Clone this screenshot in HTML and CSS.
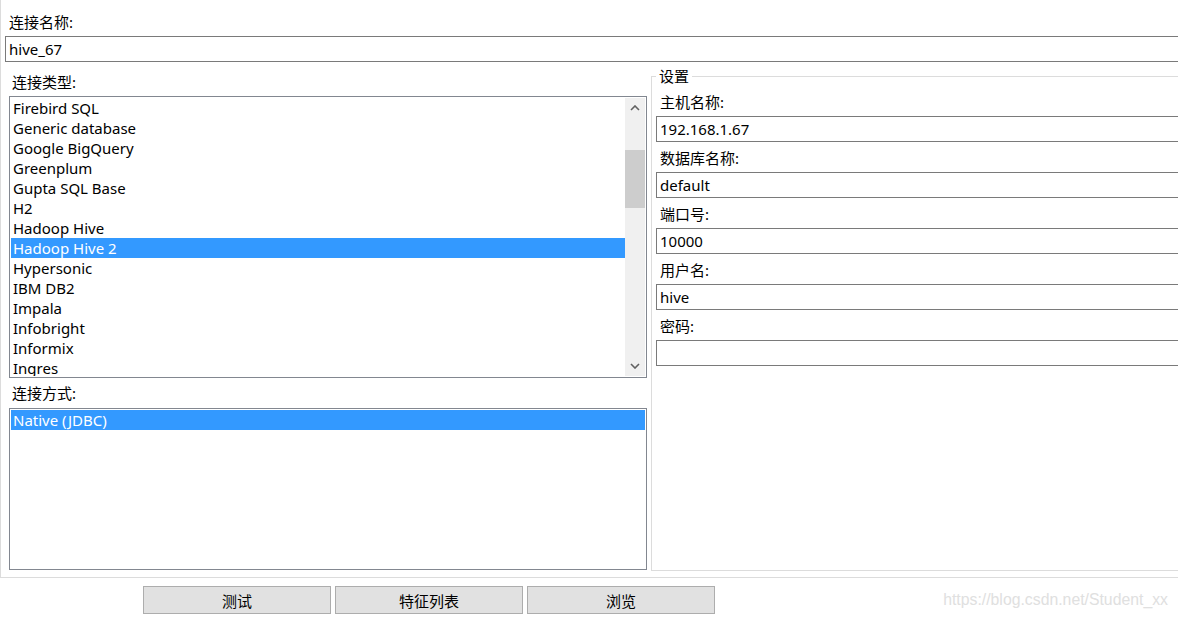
FILE: index.html
```html
<!DOCTYPE html>
<html lang="zh">
<head>
<meta charset="utf-8">
<title>连接</title>
<link rel="stylesheet" href="styles.css">
</head>
<body>
<div class="panel">
  <div class="label top-label">连接名称:</div>
  <div class="input top-input">hive_67</div>
  <div class="row">
    <div class="left-col">
      <div class="label sub-label">连接类型:</div>
      <div class="list list-types">
        <div class="items">
          <div class="item">Firebird SQL</div>
          <div class="item">Generic database</div>
          <div class="item">Google BigQuery</div>
          <div class="item">Greenplum</div>
          <div class="item">Gupta SQL Base</div>
          <div class="item">H2</div>
          <div class="item">Hadoop Hive</div>
          <div class="item selected">Hadoop Hive 2</div>
          <div class="item">Hypersonic</div>
          <div class="item">IBM DB2</div>
          <div class="item">Impala</div>
          <div class="item">Infobright</div>
          <div class="item">Informix</div>
          <div class="item">Ingres</div>
        </div>
        <div class="scrollbar">
          <div class="arrow">
            <svg width="10" height="6" viewBox="0 0 10 6"><path d="M1 5 L5 1 L9 5" fill="none" stroke="#606060" stroke-width="1.6"/></svg>
          </div>
          <div class="track"><div class="thumb"></div></div>
          <div class="arrow">
            <svg width="10" height="6" viewBox="0 0 10 6"><path d="M1 1 L5 5 L9 1" fill="none" stroke="#606060" stroke-width="1.6"/></svg>
          </div>
        </div>
      </div>
      <div class="label sub-label mid-label">连接方式:</div>
      <div class="list list-access">
        <div class="items">
          <div class="item selected">Native (JDBC)</div>
        </div>
      </div>
    </div>
    <fieldset class="settings">
      <legend>设置</legend>
      <div class="field">
        <div class="label">主机名称:</div>
        <div class="input">192.168.1.67</div>
      </div>
      <div class="field">
        <div class="label">数据库名称:</div>
        <div class="input">default</div>
      </div>
      <div class="field">
        <div class="label">端口号:</div>
        <div class="input">10000</div>
      </div>
      <div class="field">
        <div class="label">用户名:</div>
        <div class="input">hive</div>
      </div>
      <div class="field">
        <div class="label">密码:</div>
        <div class="input"></div>
      </div>
    </fieldset>
  </div>
</div>
<div class="buttons">
  <button class="btn">测试</button>
  <button class="btn">特征列表</button>
  <button class="btn">浏览</button>
  <span class="watermark">https://blog.csdn.net/Student_xx</span>
</div>
</body>
</html>
```
FILE: styles.css
```css
html, body {
  margin: 0;
  padding: 0;
}
body {
  width: 1178px;
  height: 620px;
  overflow: hidden;
  background: #ffffff;
  font-family: "Noto Sans", "Noto Sans CJK SC", sans-serif;
  font-size: 15px;
  color: #000;
}
.panel {
  box-sizing: border-box;
  height: 578px;
  border-left: 1px solid #dcdcdc;
  border-bottom: 1px solid #dcdcdc;
  padding-top: 12px;
  overflow: hidden;
}
.label {
  height: 20px;
  line-height: 20px;
  white-space: nowrap;
}
.top-label {
  padding-left: 8px;
  margin-bottom: 4px;
}
.input {
  box-sizing: border-box;
  height: 26px;
  line-height: 24px;
  border: 1px solid #7a7a7a;
  padding-left: 3px;
  background: #fff;
  white-space: nowrap;
}
.top-input {
  margin-left: 4px;
  width: calc(100% + 20px);
}
.row {
  display: flex;
}
.left-col {
  width: 650px;
  flex: none;
}
.sub-label {
  padding-left: 11px;
  margin-top: 10px;
  margin-bottom: 4px;
}
.mid-label {
  margin-top: 5px;
  margin-bottom: 5px;
}
.list {
  box-sizing: border-box;
  margin-left: 8px;
  width: 638px;
  border: 1px solid #828790;
  padding: 1px;
  display: flex;
  overflow: hidden;
  background: #fff;
}
.list-types {
  height: 282px;
}
.list-access {
  height: 162px;
}
.items {
  flex: 1;
  overflow: hidden;
}
.item {
  height: 20px;
  line-height: 20px;
  padding-left: 2px;
  white-space: nowrap;
}
.item.selected {
  background: #3399ff;
  color: #fff;
}
.scrollbar {
  width: 20px;
  flex: none;
  background: #f0f0f0;
  display: flex;
  flex-direction: column;
}
.arrow {
  height: 20px;
  display: flex;
  align-items: center;
  justify-content: center;
}
.arrow svg {
  display: block;
}
.track {
  flex: 1;
  padding-top: 32px;
}
.thumb {
  height: 58px;
  background: #cdcdcd;
}
.settings {
  flex: 1;
  margin: 5px -30px 0 0;
  padding: 7px 0 0 4px;
  border: 1px solid #dcdcdc;
  height: 504px;
  box-sizing: border-box;
  min-width: 0;
}
.settings legend {
  padding: 0 3px;
  height: 18px;
  line-height: 18px;
  font-size: 15px;
}
.field .label {
  padding-left: 4px;
  margin-bottom: 4px;
}
.field .input {
  margin-bottom: 6px;
}
.buttons {
  display: flex;
  align-items: center;
  padding-top: 8px;
  padding-left: 143px;
  padding-right: 10px;
  gap: 4px;
}
.btn {
  box-sizing: border-box;
  width: 188px;
  height: 28px;
  background: #e1e1e1;
  border: 1px solid #adadad;
  font-family: "Noto Sans CJK SC", sans-serif;
  font-size: 15px;
  color: #000;
  padding: 0;
}
.watermark {
  margin-left: auto;
  font-family: "Liberation Sans", Arial, sans-serif;
  font-size: 15.8px;
  color: #e0e0e0;
}
```
